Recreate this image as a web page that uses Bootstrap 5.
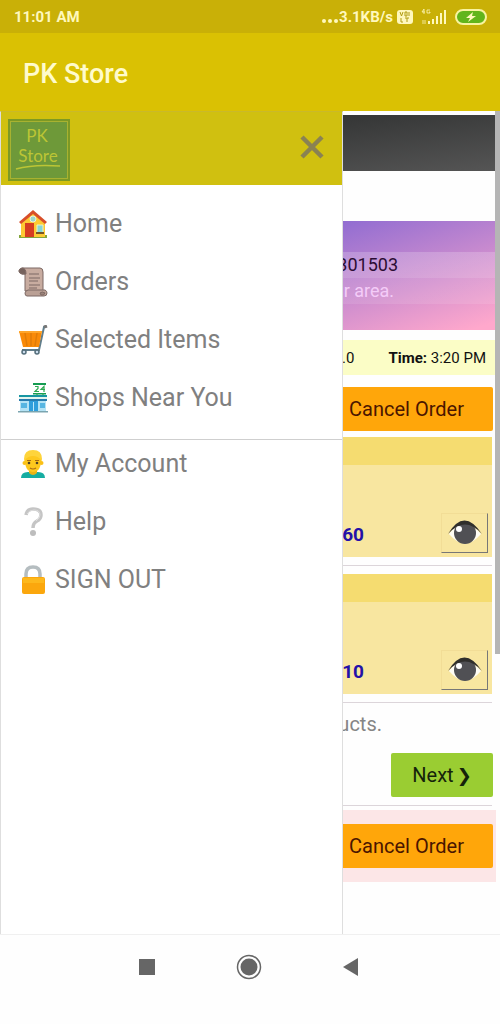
<!DOCTYPE html>
<html lang="en">
<head>
<meta charset="utf-8">
<meta name="viewport" content="width=device-width, initial-scale=1">
<title>PK Store</title>
<link href="https://cdn.jsdelivr.net/npm/bootstrap@5.3.0/dist/css/bootstrap.min.css" rel="stylesheet">
<style>
body{font-family:Roboto,"DejaVu Sans",sans-serif;background:#fefefe;color:#111}
.statusbar{background:#c9b007;color:#fff8bd;height:33px;padding:0 13px 0 14px;font-size:15px;line-height:20px}
.appbar{background:#dac103;color:#fffbcc;height:78px;padding:4px 23px 0}
.appbar h1{font-size:27px;line-height:32px;font-weight:500}
.drawer{width:343px;max-width:80%;background:#fff;border:1px solid #dedede;border-top-color:#c9b92a;border-bottom:0;z-index:5}
.drawer-head{background:#d0c010;height:73px;padding:7px 17px 4px 7px}
.closebtn{background:none;border:0;padding:0;line-height:0;margin-top:15px}
.menu a{color:#808080;font-size:25px;line-height:30px;gap:7px;text-decoration:none}
.menu{padding:24px 17px 0;gap:28px}
.menu-top{padding-bottom:26px;border-bottom:1px solid #cfcfcf}
.menu-low{padding-top:9px}
.sheet{padding:4px 4px 0 0;font-size:20px;line-height:26px}
.banner{height:56px;background:linear-gradient(172deg,#202222,#555)}
.notice{margin-top:50px;height:109px;padding:31px 98px 0 0;font-size:18px;background:linear-gradient(transparent 31px,#ffffff33 31px,#ffffff33 57px,#ffffff1a 57px,#ffffff1a 83px,transparent 83px),linear-gradient(162deg,#8566d2 35%,#ffa8cc 97%);color:#2b0c33}
.notice .area{color:#f4ccf8}
.meta{margin-top:10px;height:35px;padding:0 10px 0 0;gap:34px;background:#fbfdc6;font-size:15px}
.actrow{margin:12px 0 6px}
.actbtn{border:0;border-radius:2px;background:#ffa60a;color:#4a1500;height:44px;width:173px;margin-right:3px}
.actbtn.next{background:#9acd32;color:#15230a;width:102px}
.next b{font-size:18px;margin-left:3px}
.item-box{background:#f8e6a0;height:120px;margin-right:4px}
.item-head{height:28px;background:#f5dc70}
.price{color:#2410a8;font-size:19px;font-weight:700;gap:77px;margin-right:4px}
.price span{padding-top:4px}
.eyebtn{background:#f8e6a0;border:1px solid #f2dd96;border-right-color:#777;border-bottom-color:#777;width:47px;height:40px;padding:0;line-height:0}
.line{height:1px;background:#dcd5da;margin:8px 4px 8px 0}
.more{color:#858585;padding-right:114px;font-size:20px}
.pinkbox{background:#fce6e7;padding:14px 0}
.thumb{width:5px;height:66%;background:#b5b5b5}
.sysnav{height:90px;border-top:1px solid #f0f0f0;padding-top:18px;padding-right:2px}
.sysnav button{background:none;border:0;padding:0;width:102px;line-height:0}
</style>
</head>
<body>
<div class="d-flex flex-column min-vh-100">
  <header>
    <div class="statusbar d-flex align-items-center justify-content-between">
      <strong>11:01 AM</strong>
      <div class="d-flex align-items-center">
        <svg width="18" height="16" fill="#fff8bd"><circle cx="3" cy="12" r="2"/><circle cx="9" cy="12" r="2"/><circle cx="15" cy="12" r="2"/></svg>
        <strong>3.1KB/s</strong>
        <svg class="ms-1" width="16" height="14"><rect width="16" height="14" rx="3" fill="#fff8bd"/><path d="M3 2l1.500 4L6 2M8 2h2v4H8zM12 2v4M4 8v4h2M8 8h4M10 8v4" fill="none" stroke="#b09c10" stroke-width="1"/></svg>
        <svg class="ms-2" width="26" height="18" fill="#fff8bd"><path d="M7 13h2v3H7zM11 11h2v5h-2zM15 8h2v8h-2zM19 5h2v11h-2zM23 2h2v14h-2z"/><path d="M3 1L1 4h3M3 1v5M9 2H6v3h3V4H8M2 12v4M4 12v4" fill="none" stroke="#fff8bd" stroke-width=".8"/></svg>
        <svg class="ms-2" width="32" height="16"><rect x="1" y="1" width="30" height="14" rx="7" fill="#62b51b" stroke="#f8f4a0" stroke-width="2"/><path d="M18 3l-7 6h4l-2 4 8-6h-4z" fill="#fff8bd"/></svg>
      </div>
    </div>
    <div class="appbar d-flex align-items-center"><h1 class="m-0">PK Store</h1></div>
  </header>

  <div class="position-relative flex-grow-1 overflow-hidden">
    <aside class="drawer position-absolute top-0 bottom-0 start-0">
      <div class="drawer-head d-flex justify-content-between align-items-start">
        <svg width="62" height="62" role="img" aria-label="PK Store">
          <rect width="62" height="62" fill="#7c9925"/><rect x="2.500" y="2.500" width="57" height="57" fill="#6e9939" stroke="#a8b230"/>
          <g fill="#bcc535" font-family="Lato" font-weight="400" text-anchor="middle"><text x="29" y="23" font-size="17">PK</text><text x="30" y="43" font-size="17">Store</text></g>
          <path d="M8 50Q25 45 52 47" fill="none" stroke="#bcc535" stroke-width="1.500"/>
        </svg>
        <button class="closebtn" aria-label="Close menu"><svg width="26" height="26"><path d="M3 3l20 20M23 3L3 23" stroke="#8a8253" stroke-width="4.500"/></svg></button>
      </div>
      <nav>
        <div class="menu menu-top d-flex flex-column">
          <a href="#" class="d-flex align-items-center"><svg width="30" height="30" viewBox="0 0 30 30"><path d="M1 26h28v3H1z" fill="#83a63d"/><path d="M3 14L15 4l12 10v14H3z" fill="#fdc933"/><path d="M1 13L15 1l14 12-2 2L15 5 3 15z" fill="#d84e29"/><path d="M7 14h9v14H7z" fill="#d63c21"/><path d="M19 16h6v8h-6z" fill="#86d6d5" stroke="#eef2c5"/><circle cx="15" cy="10" r="3" fill="#9bd6cb" stroke="#eed"/><path d="M18 24h8" stroke="#775426" stroke-width="2"/></svg>Home</a>
          <a href="#" class="d-flex align-items-center"><svg width="30" height="30" viewBox="0 0 30 30" stroke="#7d6964" stroke-width="1"><path d="M4 1h18q3 0 3 4v19H7V7H4q-3-1-3-3t3-3z" fill="#c8aca0"/><path d="M4 1q4 0 4 6H4q-3-1-3-3t3-3z" fill="#75625d"/><path d="M10 23h17q2 1 2 3 0 3-3 3H9q-2 0-2-3 0-2 3-3z" fill="#baa095"/><path d="M22 26q2-2 5 0-1 3-4 2z" fill="#9b8279"/><path d="M11 7h10M11 11h11M11 14h9M11 18h11M11 21h8"/></svg>Orders</a>
          <a href="#" class="d-flex align-items-center"><svg width="30" height="30" viewBox="0 0 30 30"><path d="M28 2h-2l-5 23H4" fill="none" stroke="#607d8b" stroke-width="2"/><path d="M26 2l3-1" stroke="#777" stroke-width="3"/><path d="M1 6h23l-3 16H5z" fill="#f98a08"/><path d="M7 8l2 13M13 8v13M19 8l-2 13" stroke="#e07c08" stroke-width="1.500"/><path d="M1 7h23" stroke="#ffa52a" stroke-width="2"/><circle cx="6" cy="27" r="2" fill="#cde" stroke="#546e7a" stroke-width="1.500"/><circle cx="19" cy="27" r="2" fill="#cde" stroke="#546e7a" stroke-width="1.500"/></svg>Selected Items</a>
          <a href="#" class="d-flex align-items-center"><svg width="30" height="30" viewBox="0 0 30 30"><path d="M2 15h26v13H2z" fill="#b4e3f5"/><path d="M1 12h28v2H1z" fill="#1796a2"/><path d="M1 14h28v2H1z" fill="#e4f5ee"/><path d="M1 16h28v2H1z" fill="#277cae"/><path d="M11 18h9v10h-9z" fill="#2f9edb"/><path d="M15.500 19v9" stroke="#bce8fa"/><path d="M3 20h6v5H3zM22 20h5v5h-5z" fill="#57b6e2"/><path d="M0 28h30v1.500H0z" fill="#7ba5b0"/><path d="M15 0h13v2H15zM15 10h13v1.500H15z" fill="#159c52"/><path d="M17 3.500h3v2l-3 3h4M26 9V3.500l-3 3h4M19 10v2M25 10v2" fill="none" stroke="#2eaa52" stroke-width="1.200"/></svg>Shops Near You</a>
        </div>
        <div class="menu menu-low d-flex flex-column">
          <a href="#" class="d-flex align-items-center"><svg width="30" height="30" viewBox="0 0 30 30"><path d="M3 29q0-6 7-6h10q7 0 7 6z" fill="#16ada2"/><path d="M11 19h8v5q-4 4-8 0z" fill="#eab414"/><path d="M6 10Q6 1 15 1t9 9l-1 5H7z" fill="#fed43b"/><path d="M7 11q3-4 8-4t8 4q0 12-8 12T7 11z" fill="#fdc81e"/><circle cx="6.500" cy="14" r="2" fill="#fbc016"/><circle cx="23.500" cy="14" r="2" fill="#fbc016"/><circle cx="11" cy="14" r="1.300" fill="#4d4028"/><circle cx="19" cy="14" r="1.300" fill="#4d4028"/><path d="M9 11.500h4M17 11.500h4M12 19q3 2 6 0" fill="none" stroke="#a96c12" stroke-width="1.200"/></svg>My Account</a>
          <a href="#" class="d-flex align-items-center"><svg width="30" height="30" viewBox="0 0 30 30"><path d="M8 8q1-6 7-6 8 0 8 6 0 4-4 6-4 2-4 7" fill="none" stroke="#c5c5c5" stroke-width="3.500"/><path d="M9 7q2-4 7-4 6 0 6 5 0 3-4 6" fill="none" stroke="#ddd"/><circle cx="15" cy="26" r="3" fill="#bdbdbd"/></svg>Help</a>
          <a href="#" class="d-flex align-items-center"><svg width="30" height="30" viewBox="0 0 30 30"><path d="M8 14V9q0-7 7-7t7 7v5" fill="none" stroke="#b5bdc0" stroke-width="3.500"/><rect x="4" y="12" width="23" height="17" rx="2" fill="#fba70d"/><path d="M5 13h21v5H5z" fill="#fdb81c"/></svg>SIGN OUT</a>
        </div>
      </nav>
    </aside>

    <main class="sheet">
      <div class="banner"></div>
      <section class="notice text-end"><div>301503</div><div class="area pe-1">r area.</div></section>
      <div class="meta d-flex align-items-center justify-content-end"><span>.0</span><span><b>Time:</b> 3:20 PM</span></div>
      <div class="actrow d-flex justify-content-end"><button class="actbtn">Cancel Order</button></div>
      <div class="item-box d-flex flex-column">
        <div class="item-head"></div>
        <div class="price d-flex align-items-center justify-content-end mt-auto mb-1"><span>60</span><button class="eyebtn" aria-label="View item"><svg width="36" height="26" viewBox="0 0 36 26"><path d="M2 14Q17-6 34 14 18 33 2 14z" fill="#fffdf4"/><circle cx="18" cy="13" r="11" fill="#505054"/><path d="M1 14Q17-13 35 14 18-5 1 14z" fill="#302f2c"/><circle cx="12" cy="9" r="3" fill="#fff"/></svg></button></div>
      </div>
      <div class="line"></div>
      <div class="item-box d-flex flex-column">
        <div class="item-head"></div>
        <div class="price d-flex align-items-center justify-content-end mt-auto mb-1"><span>10</span><button class="eyebtn" aria-label="View item"><svg width="36" height="26" viewBox="0 0 36 26"><path d="M2 14Q17-6 34 14 18 33 2 14z" fill="#fffdf4"/><circle cx="18" cy="13" r="11" fill="#505054"/><path d="M1 14Q17-13 35 14 18-5 1 14z" fill="#302f2c"/><circle cx="12" cy="9" r="3" fill="#fff"/></svg></button></div>
      </div>
      <div class="line"></div>
      <div class="more text-end">ucts.</div>
      <div class="d-flex justify-content-end mt-3"><button class="actbtn next">Next<b>❯</b></button></div>
      <div class="line mb-1"></div>
      <div class="pinkbox d-flex justify-content-end"><button class="actbtn">Cancel Order</button></div>
    </main>
    <div class="thumb position-absolute top-0 end-0"></div>
  </div>

  <nav class="sysnav d-flex justify-content-center align-items-start" aria-label="System">
    <button aria-label="Recent apps"><svg width="28" height="28"><path d="M6 6h16v16H6z" fill="#666"/></svg></button>
    <button aria-label="Home"><svg width="28" height="28"><circle cx="14" cy="14" r="11.500" fill="none" stroke="#666" stroke-width="1.500"/><circle cx="14" cy="14" r="8.500" fill="#666"/></svg></button>
    <button aria-label="Back"><svg width="28" height="28"><path d="M6 14l15-9v18z" fill="#666"/></svg></button>
  </nav>
</div>
<script src="https://cdn.jsdelivr.net/npm/bootstrap@5.3.0/dist/js/bootstrap.bundle.min.js"></script>
</body>
</html>
